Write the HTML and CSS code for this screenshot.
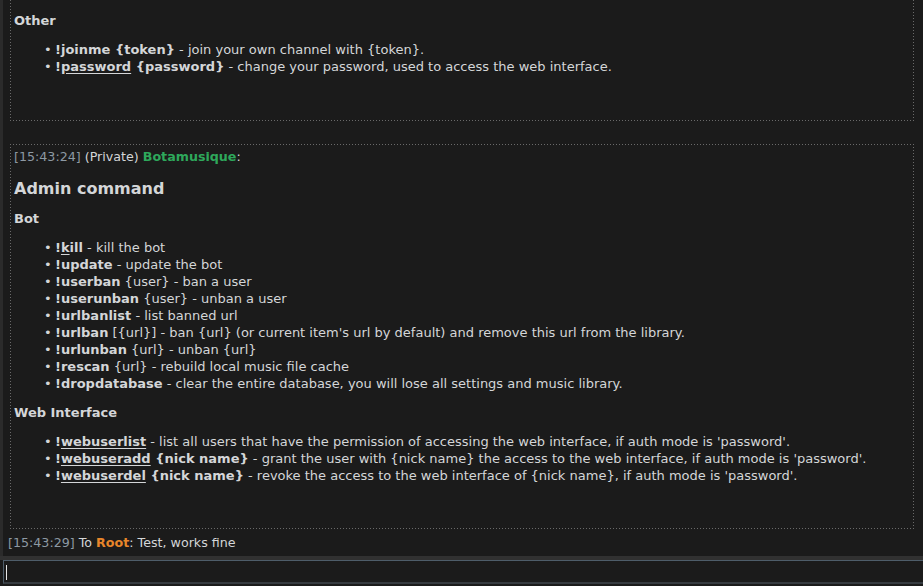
FILE: index.html
```html
<!DOCTYPE html>
<html>
<head>
<meta charset="utf-8">
<link rel="stylesheet" href="styles.css">
</head>
<body>
<div class="app">
  <div class="log">
    <div class="msg msg-cut">
      <h4>Other</h4>
      <ul>
        <li><b>!joinme {token}</b> - join your own channel with {token}.</li>
        <li><b>!<u>password</u> {password}</b> - change your password, used to access the web interface.</li>
      </ul>
    </div>
    <div class="msg">
      <div class="head"><span class="ts">[15:43:24]</span> (Private) <b class="bot">Botamusique</b>:</div>
      <h2>Admin command</h2>
      <h4>Bot</h4>
      <ul>
        <li><b>!<u>k</u>ill</b> - kill the bot</li>
        <li><b>!update</b> - update the bot</li>
        <li><b>!userban</b> {user} - ban a user</li>
        <li><b>!userunban</b> {user} - unban a user</li>
        <li><b>!urlbanlist</b> - list banned url</li>
        <li><b>!urlban</b> [{url}] - ban {url} (or current item's url by default) and remove this url from the library.</li>
        <li><b>!urlunban</b> {url} - unban {url}</li>
        <li><b>!rescan</b> {url} - rebuild local music file cache</li>
        <li><b>!dropdatabase</b> - clear the entire database, you will lose all settings and music library.</li>
      </ul>
      <h4 class="sec">Web Interface</h4>
      <ul>
        <li><b>!<u>webuserlist</u></b> - list all users that have the permission of accessing the web interface, if auth mode is 'password'.</li>
        <li><b>!<u>webuseradd</u> {nick name}</b> - grant the user with {nick name} the access to the web interface, if auth mode is 'password'.</li>
        <li><b>!<u>webuserdel</u> {nick name}</b> - revoke the access to the web interface of {nick name}, if auth mode is 'password'.</li>
      </ul>
    </div>
    <div class="line"><span class="ts">[15:43:29]</span> To <b class="root">Root</b>: Test, works fine</div>
  </div>
  <div class="sep"></div>
  <div class="inputrow"><div class="input"><span class="caret"></span></div></div>
</div>
</body>
</html>
```
FILE: styles.css
```css
html, body {
  margin: 0;
  padding: 0;
  background: #1b1b1b;
}
body {
  font-family: "DejaVu Sans", sans-serif;
  font-size: 13px;
  line-height: 17px;
  color: #d4d6d8;
}
.app {
  width: 923px;
  height: 586px;
  display: flex;
  flex-direction: column;
  overflow: hidden;
}
.log {
  height: 556px;
  box-sizing: border-box;
  border-left: 3px solid #2b2b2b;
  padding: 0 9px 0 7px;
  overflow: hidden;
}
.msg {
  --dot: #6a6a6a;
  padding: 4px 3px 45px 4px;
  background:
    repeating-linear-gradient(to right, var(--dot) 0 1px, transparent 1px 3px) left top / 100% 1px no-repeat,
    repeating-linear-gradient(to right, var(--dot) 0 1px, transparent 1px 3px) left bottom / 100% 1px no-repeat,
    repeating-linear-gradient(to bottom, var(--dot) 0 1px, transparent 1px 3px) left top / 1px 100% no-repeat,
    repeating-linear-gradient(to bottom, var(--dot) 0 1px, transparent 1px 3px) right top / 1px 100% no-repeat;
}
.msg-cut {
  padding-top: 12px;
  padding-bottom: 46px;
  margin-bottom: 23px;
  background:
    repeating-linear-gradient(to right, var(--dot) 0 1px, transparent 1px 3px) left bottom / 100% 1px no-repeat,
    repeating-linear-gradient(to bottom, var(--dot) 0 1px, transparent 1px 3px) left top / 1px 100% no-repeat,
    repeating-linear-gradient(to bottom, var(--dot) 0 1px, transparent 1px 3px) right top / 1px 100% no-repeat;
}
.head,
.line {
  font-size: 12.67px;
}
h4 {
  margin: 0;
  font-size: 13px;
  font-weight: bold;
}
h2 {
  margin: 13px 0 0;
  font-size: 16px;
  line-height: 22px;
  font-weight: bold;
}
h2 + h4 {
  margin-top: 10px;
}
h4.sec {
  margin-top: 12px;
}
ul {
  list-style: none;
  margin: 12px 0 0;
  padding: 0 0 0 30px;
}
li::before {
  content: "•";
  display: inline-block;
  width: 11px;
}
b {
  font-weight: bold;
}
u {
  text-decoration: underline;
  text-underline-offset: 2px;
}
.ts {
  color: #8d99a3;
}
.bot {
  color: #2ea85b;
}
.root {
  color: #e8862a;
}
.line {
  padding: 5px 0 0;
  margin-left: -2px;
}
.sep {
  height: 4px;
  background: #313131;
}
.inputrow {
  flex: 1;
  padding: 0 0 0 3px;
}
.input {
  height: 21px;
  border-top: 1px solid #4e5d6a;
  border-left: 1px solid #4e5d6a;
  border-bottom: 2px solid #363b40;
  box-sizing: content-box;
  position: relative;
}
.caret {
  position: absolute;
  left: 2px;
  top: 4px;
  width: 1px;
  height: 15px;
  background: #e8e8e8;
}
```
